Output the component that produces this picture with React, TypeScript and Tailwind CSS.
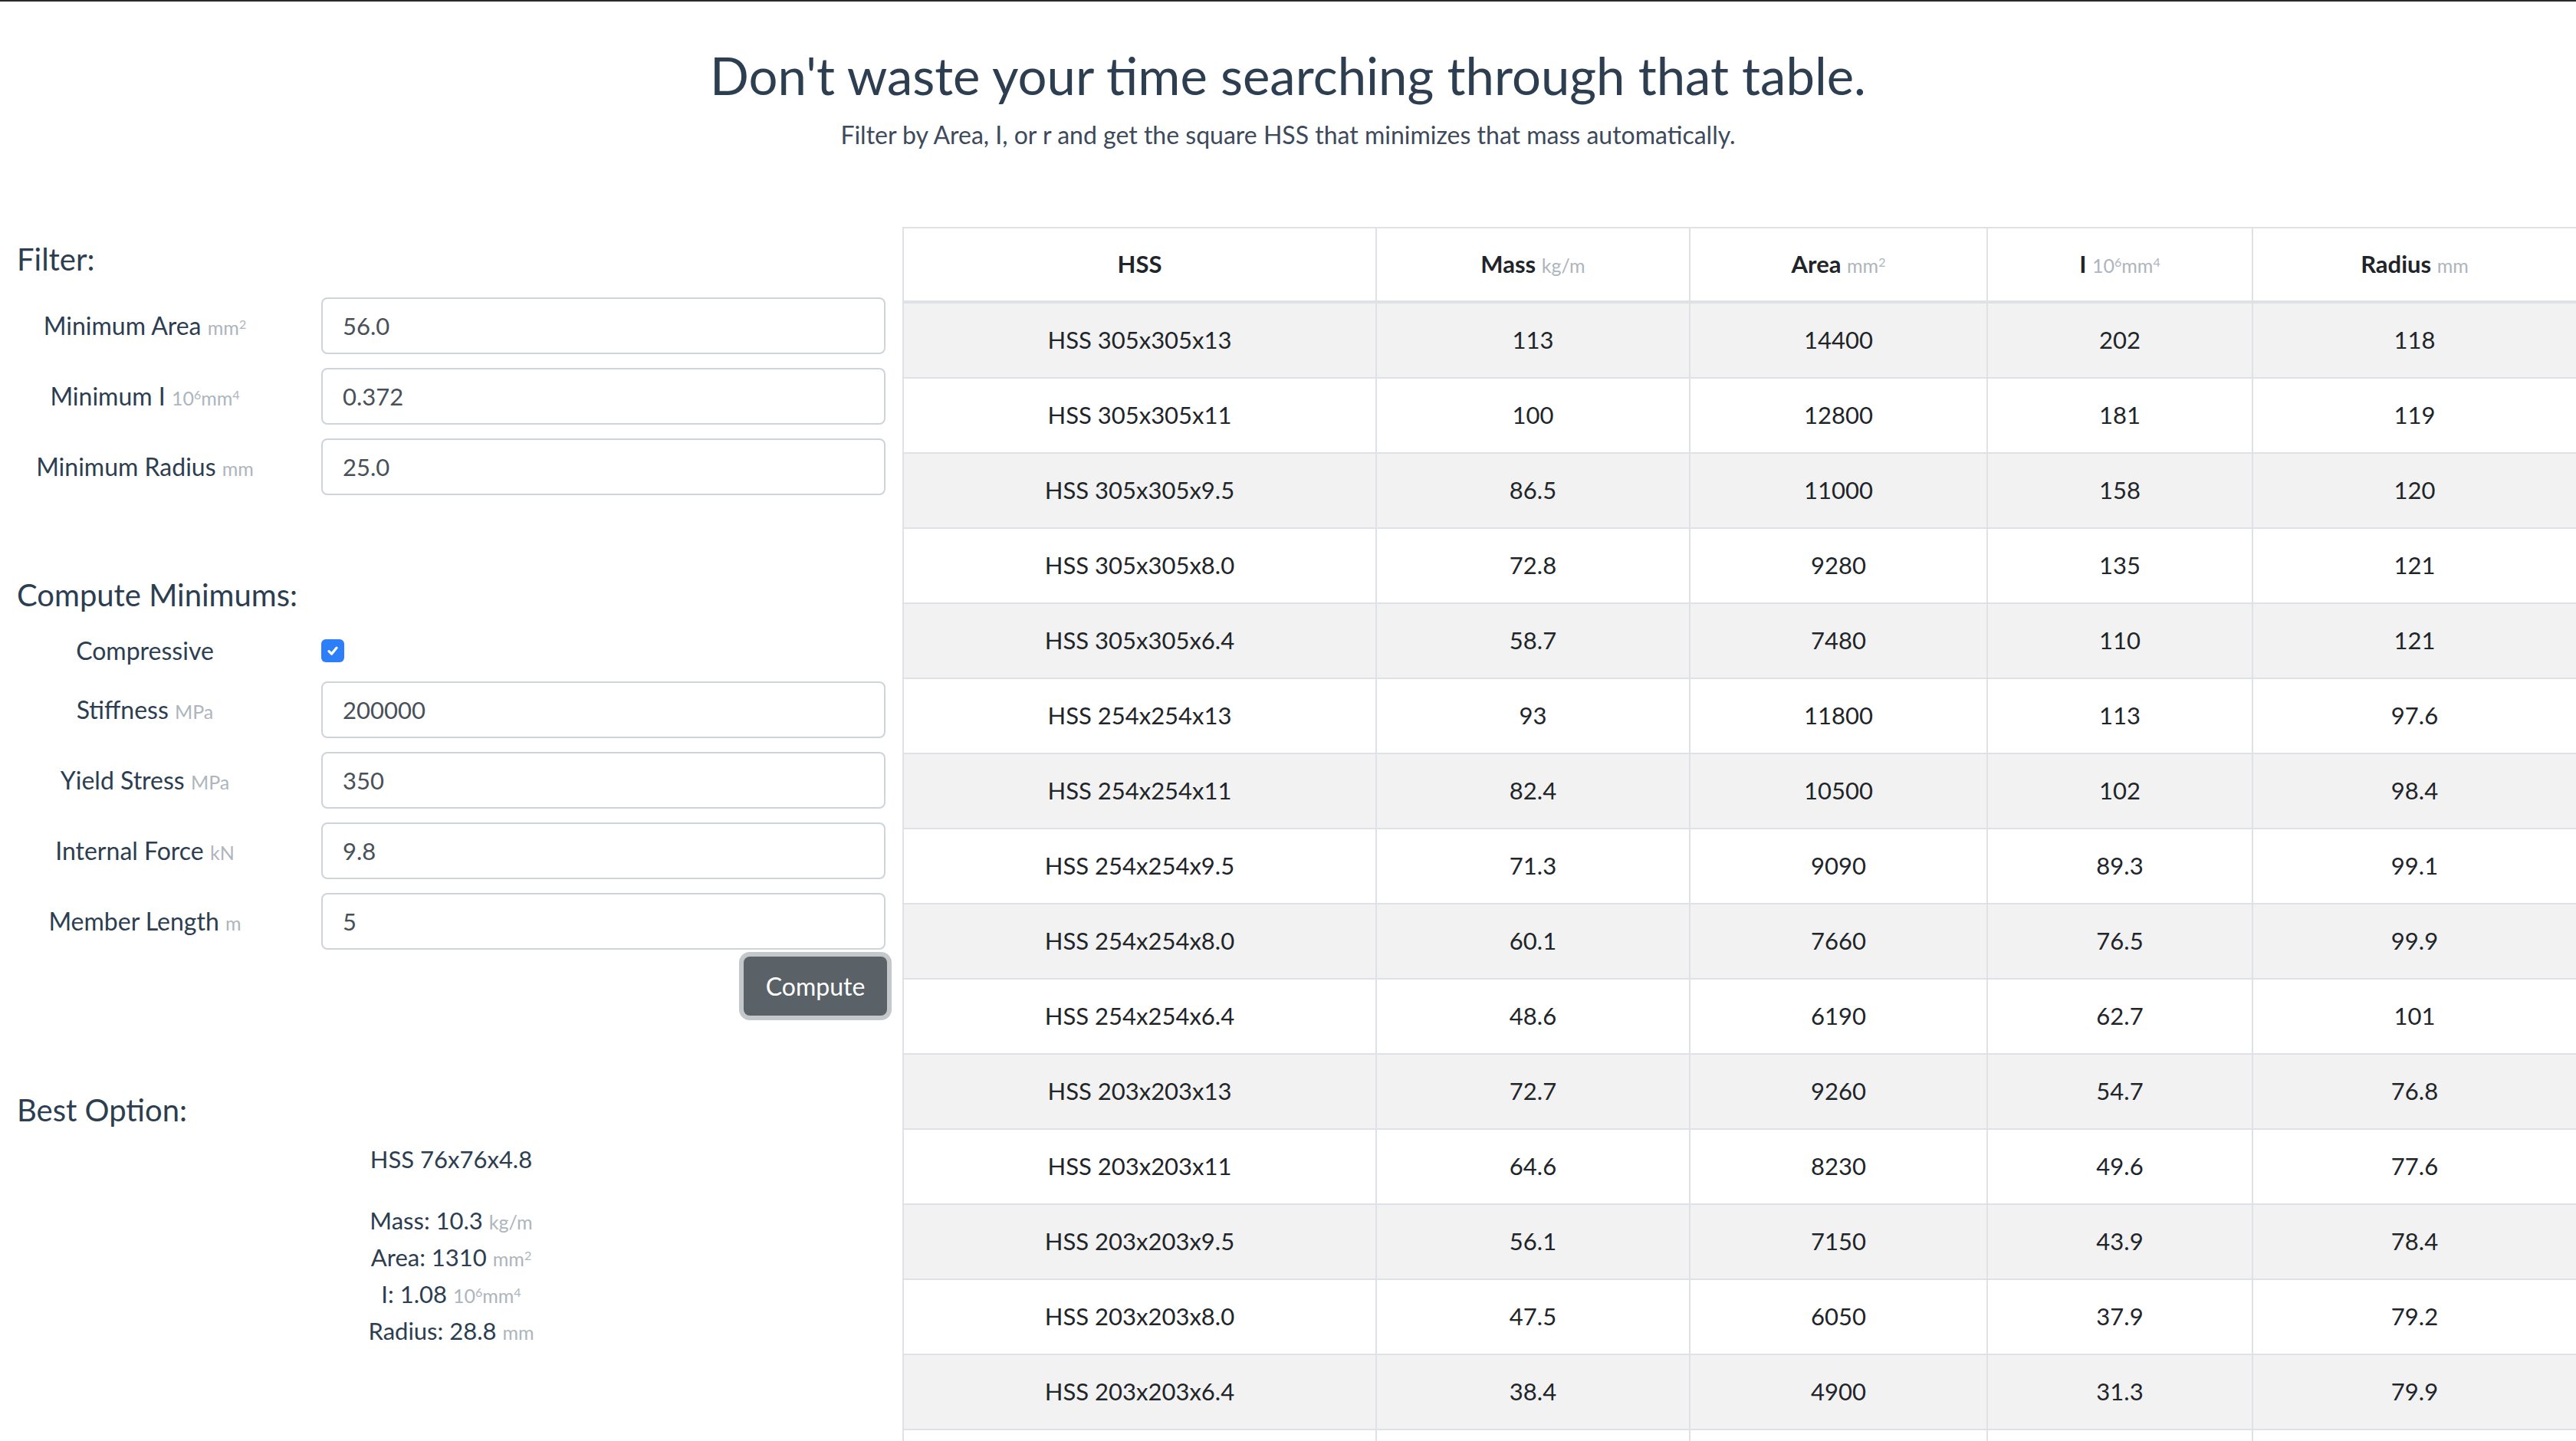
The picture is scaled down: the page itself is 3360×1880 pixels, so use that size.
import type { ReactNode } from 'react'

type Row = [string, string, string, string, string]

const rows: Row[] = [
  ['HSS 305x305x13', '113', '14400', '202', '118'],
  ['HSS 305x305x11', '100', '12800', '181', '119'],
  ['HSS 305x305x9.5', '86.5', '11000', '158', '120'],
  ['HSS 305x305x8.0', '72.8', '9280', '135', '121'],
  ['HSS 305x305x6.4', '58.7', '7480', '110', '121'],
  ['HSS 254x254x13', '93', '11800', '113', '97.6'],
  ['HSS 254x254x11', '82.4', '10500', '102', '98.4'],
  ['HSS 254x254x9.5', '71.3', '9090', '89.3', '99.1'],
  ['HSS 254x254x8.0', '60.1', '7660', '76.5', '99.9'],
  ['HSS 254x254x6.4', '48.6', '6190', '62.7', '101'],
  ['HSS 203x203x13', '72.7', '9260', '54.7', '76.8'],
  ['HSS 203x203x11', '64.6', '8230', '49.6', '77.6'],
  ['HSS 203x203x9.5', '56.1', '7150', '43.9', '78.4'],
  ['HSS 203x203x8.0', '47.5', '6050', '37.9', '79.2'],
  ['HSS 203x203x6.4', '38.4', '4900', '31.3', '79.9'],
]

function Unit({ children }: { children: ReactNode }) {
  return <span className="text-[25px] leading-none font-normal text-[#adb5bd]">{children}</span>
}

function Sup({ children }: { children: ReactNode }) {
  return <sup className="text-[16px] leading-[0]">{children}</sup>
}

const mm2 = <Unit>mm<Sup>2</Sup></Unit>
const mm4 = <Unit>10<Sup>6</Sup>mm<Sup>4</Sup></Unit>

function Field({ label, unit, value }: { label: string; unit?: ReactNode; value: string }) {
  return (
    <div className="flex items-center">
      <label className="w-[378px] text-center text-[32px] text-[#2c3e50]">
        {label} {unit}
      </label>
      <input
        readOnly
        value={value}
        className="ml-[41px] w-[736px] h-[74px] px-[26px] border-2 border-[#ced4da] rounded-[8px] text-[31px] text-[#495057] bg-white outline-none"
      />
    </div>
  )
}

const grid = 'grid grid-cols-[617px_409px_388px_346px_1fr]'
const cell = 'flex items-center justify-center pb-[3px] border-l-2 border-[#dee2e6]'

export default function App() {
  return (
    <div className="min-h-screen bg-white border-t-2 border-[#2a2a2a] font-['Lato',sans-serif] text-[#2c3e50]">
      {/* Header */}
      <header className="text-center pt-[56px]">
        <h1 className="text-[67px] leading-[1.2]">Don't waste your time searching through that table.</h1>
        <p className="mt-[14px] text-[32px] leading-[1.5] text-[#3d4a5b]">
          Filter by Area, I, or r and get the square HSS that minimizes that mass automatically.
        </p>
      </header>

      <div className="flex mt-[96px]">
        {/* Left panel */}
        <div className="w-[1177px] shrink-0">
          <h2 className="pl-[22px] pt-[18px] text-[40px] leading-[1.2]">Filter:</h2>
          <div className="mt-[26px] flex flex-col gap-[18px]">
            <Field label="Minimum Area" unit={mm2} value="56.0" />
            <Field label="Minimum I" unit={mm4} value="0.372" />
            <Field label="Minimum Radius" unit={<Unit>mm</Unit>} value="25.0" />
          </div>

          <h2 className="pl-[22px] mt-[106px] text-[40px] leading-[1.2]">Compute Minimums:</h2>
          <div className="mt-[29px] flex items-center h-[40px]">
            <span className="w-[378px] text-center text-[32px]">Compressive</span>
            <span className="ml-[41px] w-[30px] h-[30px] rounded-[6px] bg-[#2d7ff9] flex items-center justify-center">
              <svg viewBox="0 0 16 16" className="w-[20px] h-[20px]" fill="none" stroke="white" strokeWidth="2.6" strokeLinecap="round" strokeLinejoin="round">
                <path d="M4 8.5l2.8 2.8L12 5" />
              </svg>
            </span>
          </div>
          <div className="mt-[20px] flex flex-col gap-[18px]">
            <Field label="Stiffness" unit={<Unit>MPa</Unit>} value="200000" />
            <Field label="Yield Stress" unit={<Unit>MPa</Unit>} value="350" />
            <Field label="Internal Force" unit={<Unit>kN</Unit>} value="9.8" />
            <Field label="Member Length" unit={<Unit>m</Unit>} value="5" />
          </div>
          <div className="w-[1157px] flex justify-end mt-[9px]">
            <button className="w-[187px] h-[77px] rounded-[8px] bg-[#5a6268] text-white text-[32px] ring-[6px] ring-[#c4c8cb]">
              Compute
            </button>
          </div>

          <h2 className="pl-[22px] mt-[99px] text-[40px] leading-[1.2]">Best Option:</h2>
          <div className="text-center text-[31px]">
            <p className="mt-[17px] leading-[46px]">HSS 76x76x4.8</p>
            <div className="mt-[33px] leading-[48px]">
              <p>Mass: 10.3 <Unit>kg/m</Unit></p>
              <p>Area: 1310 {mm2}</p>
              <p>I: 1.08 {mm4}</p>
              <p>Radius: 28.8 <Unit>mm</Unit></p>
            </div>
          </div>
        </div>

        {/* Table */}
        <div className="flex-1 text-[31px] text-[#212529]">
          <div className={`${grid} h-[100px] border-t-2 border-b-4 border-[#dee2e6] bg-white font-bold`}>
            <div className={cell}>HSS</div>
            <div className={cell}><span>Mass <Unit>kg/m</Unit></span></div>
            <div className={cell}><span>Area {mm2}</span></div>
            <div className={cell}><span>I {mm4}</span></div>
            <div className={cell}><span>Radius <Unit>mm</Unit></span></div>
          </div>
          {rows.map((r, i) => (
            <div
              key={r[0]}
              className={`${grid} h-[98px] border-b-2 border-[#dee2e6] ${i % 2 === 0 ? 'bg-[#f2f2f2]' : 'bg-white'}`}
            >
              {r.map((v, j) => (
                <div key={j} className={cell}>{v}</div>
              ))}
            </div>
          ))}
          {/* next row, scrolled below the fold */}
          <div className={`${grid} h-[98px] bg-white`}>
            {[0, 1, 2, 3, 4].map(j => <div key={j} className={cell} />)}
          </div>
        </div>
      </div>
    </div>
  )
}
